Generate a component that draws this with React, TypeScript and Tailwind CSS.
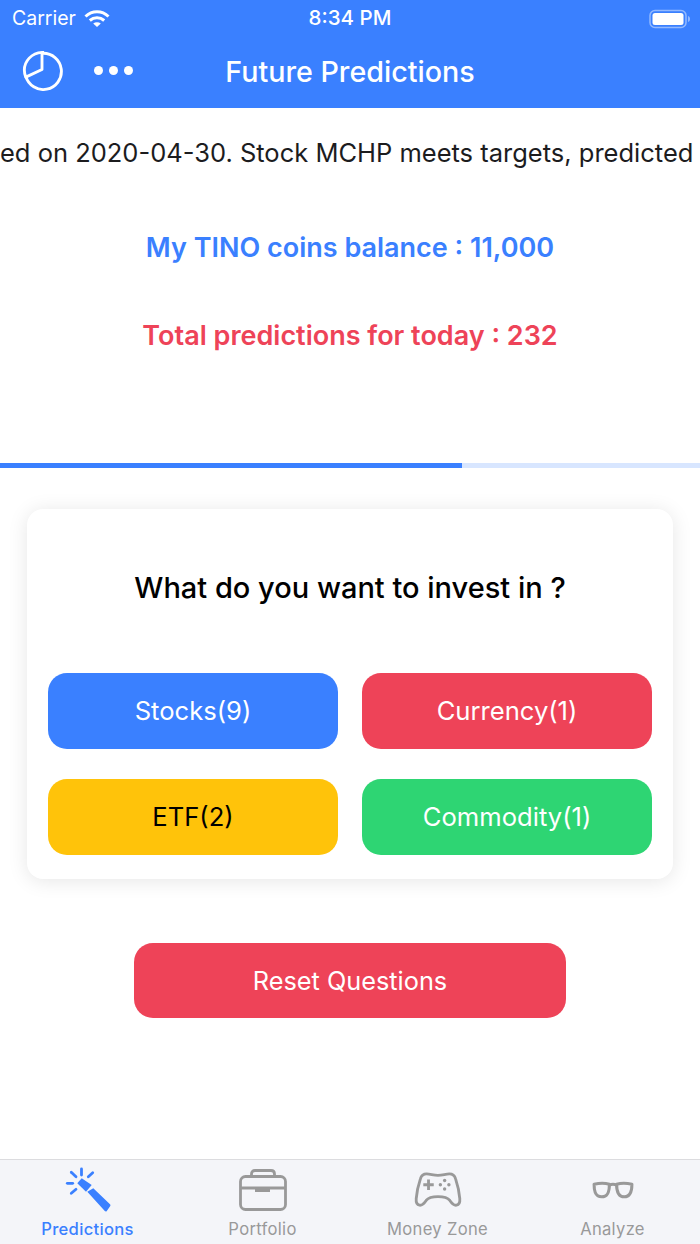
import React from "react";

const font = { fontFamily: "Inter, 'Liberation Sans', sans-serif" };

function Wifi() {
  return (
    <svg width="26" height="19" viewBox="0 0 26 19" fill="none" stroke="#fff" strokeWidth="3">
      <path d="M1.500 7.500C8 1.200 18 1.200 24.500 7.500" />
      <path d="M5.800 11.500C10 7.800 16 7.800 20.200 11.500" />
      <path d="M13 18l-3.800-3.600c2.200-1.700 5.400-1.700 7.600 0z" fill="#fff" stroke="none" />
    </svg>
  );
}

function Battery() {
  return (
    <svg width="42" height="20" viewBox="0 0 42 20" fill="none">
      <rect x="1" y="1.500" width="36" height="17" rx="5" stroke="#fff" strokeOpacity="0.45" strokeWidth="1.500" />
      <rect x="3.500" y="4" width="31" height="12" rx="2.500" fill="#fff" />
      <path d="M39 7c1.600.5 2 1.600 2 3s-.4 2.500-2 3z" fill="#fff" fillOpacity="0.45" />
    </svg>
  );
}

function Pie() {
  return (
    <svg width="42" height="42" viewBox="0 0 44 44" fill="none" stroke="#fff" strokeWidth="3" strokeLinejoin="round">
      <path d="M22.500 4.500A19 19 0 1 1 5 28.500" />
      <path d="M22 3.500C11 4 3.500 13 3.500 22c0 2.500.5 5 1.500 7.500L22 21.500z" />
      <path d="M22 3.500c.8 0 1.500 0 2 .1" />
    </svg>
  );
}

function Wand() {
  return (
    <svg width="46" height="46" viewBox="0 0 46 46" fill="#3a80ff">
      <path d="M16.700 11.300L26.700 18 21 24.700 12.300 16.300z" />
      <path d="M28.300 21.300L45 37.200c.6.6.6 1.300.1 2l-3.300 4.700c-.5.700-1.300.8-2 .1L22.300 24.700z" />
      <g stroke="#3a80ff" strokeWidth="2.800" strokeLinecap="round">
        <path d="M16.500 2v6" />
        <path d="M23.300 9.700L27.700 5.700" />
        <path d="M6.300 5.300L11 9.700" />
        <path d="M2.300 16.300H7.700" />
        <path d="M6.300 26.300L11 22.300" />
      </g>
    </svg>
  );
}

function Case() {
  return (
    <svg width="48" height="42" viewBox="0 0 48 42" fill="none" stroke="#999" strokeWidth="2.800" strokeLinejoin="round">
      <rect x="1.500" y="7.500" width="45" height="33" rx="5" />
      <path d="M12.500 7.500V5c0-2.300 1.200-3.500 3.500-3.500h16c2.300 0 3.500 1.200 3.500 3.500v2.500" />
      <path d="M1.500 19h45" />
      <rect x="16" y="18" width="15" height="5" fill="#999" stroke="none" />
    </svg>
  );
}

function Pad() {
  return (
    <svg width="50" height="36" viewBox="0 0 50 38" fill="none" stroke="#999" strokeWidth="3" strokeLinejoin="round">
      <path d="M13 2c4 0 7 1.500 12 1.500S33 2 37 2c4 0 5.500 1.500 6.500 5 2 6 4 15 4.500 21 .3 3.500-1 6.500-3.500 7-3 .5-5-2-7-5-2-2.500-6-4-12.500-4s-10.500 1.500-12.500 4c-2 3-4 5.500-7 5-2.500-.5-3.800-3.500-3.500-7 .5-6 2.500-15 4.500-21 1-3.500 2.500-5 6.500-5z" />
      <path d="M15 8v11M9.500 13.500h11" />
      <g fill="#999" stroke="none">
        <circle cx="32" cy="9" r="1.800" />
        <circle cx="32" cy="18" r="1.800" />
        <circle cx="27.500" cy="13.500" r="1.800" />
        <circle cx="36.500" cy="13.500" r="1.800" />
      </g>
    </svg>
  );
}

function Glasses() {
  return (
    <svg width="46" height="18" viewBox="0 0 46 20" fill="none" stroke="#999" strokeWidth="3.400" strokeLinejoin="round">
      <path d="M2 3.500c5-1 13-1 17 0 0 6-.5 14-8.500 14S2 9.500 2 3.500z" />
      <path d="M27 3.500c4-1 12-1 17 0 0 6-1 14-8.500 14S27 9.500 27 3.500z" />
      <path d="M19 4.500c2.500-1 5.500-1 8 0" />
    </svg>
  );
}

function Choice({ label, className }: { label: string; className: string }) {
  return (
    <button className={`h-[75.500px] pt-[1px] rounded-[19px] flex items-center justify-center text-[25.600px] ${className}`}>{label}</button>
  );
}

function Tab({ icon, label, active }: { icon: React.ReactNode; label: string; active?: boolean }) {
  return (
    <div className="flex-1 flex flex-col items-center">
      <div className="h-[60px] flex items-center justify-center">{icon}</div>
      <span className={`text-[16.600px] leading-[20px] tracking-[0.3px] -mt-[1px] ${active ? "text-[#3a80ff] font-medium" : "text-[#999]"}`}>{label}</span>
    </div>
  );
}

export default function App() {
  return (
    <div style={font} className="w-[700px] h-[1244px] bg-white flex flex-col overflow-hidden">
      <header className="h-[108px] bg-[#3a80ff] text-white shrink-0 flex flex-col">
        <div className="h-[36px] pl-[12px] pr-[9px] pt-[1px] flex items-center justify-between relative">
          <div className="flex items-center gap-[8px] text-[19.500px]">
            <span>Carrier</span>
            <Wifi />
          </div>
          <span className="absolute left-0 right-0 text-center text-[20.500px] font-medium">8:34 PM</span>
          <Battery />
        </div>
        <div className="flex-1 relative flex items-center justify-center">
          <div className="absolute left-[21px] top-[13px]"><Pie /></div>
          <div className="absolute left-[94px] top-[30px] flex gap-[6px]">
            <span className="w-[9px] h-[9px] rounded-full bg-white" />
            <span className="w-[9px] h-[9px] rounded-full bg-white" />
            <span className="w-[9px] h-[9px] rounded-full bg-white" />
          </div>
          <h1 className="text-[28.700px] font-medium">Future Predictions</h1>
        </div>
      </header>

      <div className="h-[355px] shrink-0 flex flex-col items-center">
        <div className="w-full h-[90px] pt-[1px] flex items-center overflow-hidden whitespace-nowrap text-[25.500px] text-[#1c1c1e]">
          <span>ed on 2020-04-30. Stock MCHP meets targets, predicted</span>
        </div>
        <p className="mt-[30px] text-[27px] leading-[40px] font-semibold text-[#3a80ff]">My TINO coins balance : 11,000</p>
        <p className="mt-[48px] text-[27px] leading-[40px] font-semibold text-[#ee4358]">Total predictions for today : 232</p>
      </div>

      <div className="h-[5px] shrink-0 bg-[#d8e6ff]">
        <div className="h-full w-[462px] bg-[#3a80ff]" />
      </div>

      <div className="flex-1 flex flex-col items-center">
        <section className="mt-[41px] w-[646px] h-[370px] bg-white rounded-[16px] shadow-[0_2px_20px_rgba(0,0,0,0.1)] px-[21px]">
          <h2 className="h-[164px] pb-[6px] flex items-center justify-center text-[29px] font-medium text-black">What do you want to invest in ?</h2>
          <div className="grid grid-cols-2 gap-x-[24px] gap-y-[30.500px] text-white">
            <Choice label="Stocks(9)" className="bg-[#3a80ff]" />
            <Choice label="Currency(1)" className="bg-[#ee4358]" />
            <Choice label="ETF(2)" className="bg-[#ffc30a] text-black" />
            <Choice label="Commodity(1)" className="bg-[#2ed573]" />
          </div>
        </section>
        <button className="mt-[64px] w-[432px] h-[75px] pt-[1px] rounded-[19px] bg-[#ee4358] text-white text-[25.300px]">Reset Questions</button>
      </div>

      <nav className="h-[85px] shrink-0 bg-[#f4f5f9] border-t border-[#dcdcdf] flex">
        <Tab icon={<Wand />} label="Predictions" active />
        <Tab icon={<Case />} label="Portfolio" />
        <Tab icon={<Pad />} label="Money Zone" />
        <Tab icon={<Glasses />} label="Analyze" />
      </nav>
    </div>
  );
}
